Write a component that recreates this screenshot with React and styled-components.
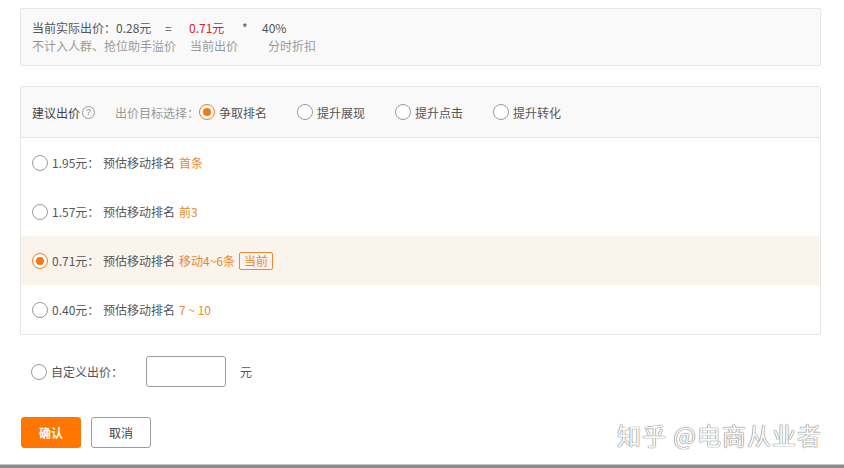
import React, { useState } from 'react';
import styled, { createGlobalStyle } from 'styled-components';

const GlobalStyle = createGlobalStyle`
  html, body {
    margin: 0;
    padding: 0;
    background: #fff;
    overflow: hidden;
  }
  body {
    font-family: "Noto Sans CJK SC", "Microsoft YaHei", sans-serif;
    font-size: 12px;
    color: #555;
  }
`;

const Page = styled.div`
  position: relative;
  width: 844px;
  height: 468px;
  padding: 8px 23px 0 20px;
  box-sizing: border-box;
`;

const Summary = styled.div`
  background: #f9f9f9;
  border: 1px solid #e6e6e6;
  border-radius: 2px;
  padding: 10px 11px;
`;

const Line = styled.div`
  display: flex;
  line-height: 18px;
  color: ${(p) => (p.muted ? '#999' : '#555')};
`;

const Cell = styled.span`
  width: ${(p) => p.w}px;
  flex-shrink: 0;
  white-space: nowrap;
  color: ${(p) => (p.red ? '#d4232b' : 'inherit')};
`;

const Panel = styled.div`
  margin-top: 20px;
  border: 1px solid #e6e6e6;
  border-radius: 2px;
`;

const PanelHead = styled.div`
  display: flex;
  align-items: center;
  height: 50px;
  padding-left: 11px;
  background: #f9f9f9;
  border-bottom: 1px solid #e6e6e6;
  color: #555;
`;

const Title = styled.span`
  display: flex;
  align-items: center;
  color: #444;
  margin-right: 20px;
`;

const Help = styled.span`
  width: 11px;
  height: 11px;
  margin-left: 2px;
  border: 1px solid #999;
  border-radius: 50%;
  font-size: 9px;
  line-height: 11px;
  text-align: center;
  color: #888;
  font-family: "Liberation Sans", sans-serif;
`;

const Label = styled.span`
  color: #999;
  width: 84px;
`;

const Option = styled.label`
  display: flex;
  align-items: center;
  width: 98px;
  cursor: pointer;
  color: #555;
`;

const Circle = styled.span`
  width: 14px;
  height: 14px;
  border-radius: 50%;
  border: 1px solid ${(p) => (p.on ? '#f07a1c' : '#9a9a9a')};
  background: #fff;
  display: flex;
  align-items: center;
  justify-content: center;
  margin-right: 4px;
  flex-shrink: 0;
  &::after {
    content: '';
    width: 8px;
    height: 8px;
    border-radius: 50%;
    background: #f57a12;
    display: ${(p) => (p.on ? 'block' : 'none')};
  }
`;

const Row = styled.label`
  display: flex;
  align-items: center;
  height: 49px;
  padding-left: 11px;
  background: ${(p) => (p.on ? '#fbf4ec' : '#fff')};
  color: #555;
  cursor: pointer;
`;

const Price = styled.span`
  width: 51px;
`;

const Rank = styled.span`
  margin-left: 4px;
  color: #e8892e;
`;

const Tag = styled.span`
  margin-left: 4px;
  padding: 0 4px;
  height: 16px;
  line-height: 16px;
  border: 1px solid #eb8a35;
  border-radius: 2px;
  color: #e8892e;
`;

const Custom = styled.div`
  display: flex;
  align-items: center;
  margin-top: 21px;
  padding-left: 11px;
  color: #555;
`;

const CustomLabel = styled.label`
  display: flex;
  align-items: center;
  width: 115px;
  cursor: pointer;
`;

const Input = styled.input`
  width: 80px;
  height: 31px;
  box-sizing: border-box;
  border: 1px solid #9c9c9c;
  border-radius: 3px;
  margin-right: 14px;
  outline: none;
`;

const Actions = styled.div`
  display: flex;
  gap: 10px;
  margin-top: 30px;
  padding-left: 1px;
`;

const Button = styled.button`
  width: 60px;
  height: 31px;
  border-radius: 3px;
  font-family: inherit;
  font-size: 12px;
  cursor: pointer;
  border: 1px solid ${(p) => (p.primary ? '#ff7700' : '#9c9c9c')};
  background: ${(p) => (p.primary ? '#ff7700' : '#fff')};
  color: ${(p) => (p.primary ? '#fff' : '#444')};
  font-weight: ${(p) => (p.primary ? 'bold' : 'normal')};
`;

const Watermark = styled.div`
  position: absolute;
  right: 22px;
  top: 417px;
  font-size: 24px;
  letter-spacing: 1px;
  color: #fdfdfd;
  text-shadow: 0 0 1px #5e5e5e, 0 0 1px #5e5e5e;
  pointer-events: none;
`;

const Strip = styled.div`
  position: absolute;
  left: 0;
  right: 0;
  top: 464px;
  height: 10px;
  background: #8d8d8d;
  border-top: 1px solid #c4c4c4;
`;

const goals = ['争取排名', '提升展现', '提升点击', '提升转化'];

const bids = [
  { price: '1.95元：', rank: '首条' },
  { price: '1.57元：', rank: '前3' },
  { price: '0.71元：', rank: '移动4~6条', current: true },
  { price: '0.40元：', rank: '7 ~ 10' },
];

export default function App() {
  const [goal, setGoal] = useState(0);
  const [bid, setBid] = useState(2);

  return (
    <Page>
      <GlobalStyle />
      <Summary>
        <Line>
          <Cell w={133}>当前实际出价：0.28元</Cell>
          <Cell w={24}>=</Cell>
          <Cell w={53} red>0.71元</Cell>
          <Cell w={20}>*</Cell>
          <Cell w={60}>40%</Cell>
        </Line>
        <Line muted>
          <Cell w={158}>不计入人群、抢位助手溢价</Cell>
          <Cell w={78}>当前出价</Cell>
          <Cell w={60}>分时折扣</Cell>
        </Line>
      </Summary>

      <Panel>
        <PanelHead>
          <Title>
            建议出价<Help>?</Help>
          </Title>
          <Label>出价目标选择：</Label>
          {goals.map((g, i) => (
            <Option key={g} onClick={() => setGoal(i)}>
              <Circle on={goal === i} />
              {g}
            </Option>
          ))}
        </PanelHead>
        {bids.map((b, i) => (
          <Row key={b.price} on={bid === i} onClick={() => setBid(i)}>
            <Circle on={bid === i} />
            <Price>{b.price}</Price>
            预估移动排名
            <Rank>{b.rank}</Rank>
            {b.current && <Tag>当前</Tag>}
          </Row>
        ))}
      </Panel>

      <Custom>
        <CustomLabel onClick={() => setBid(-1)}>
          <Circle on={bid === -1} />
          自定义出价：
        </CustomLabel>
        <Input />
        元
      </Custom>

      <Actions>
        <Button primary>确认</Button>
        <Button>取消</Button>
      </Actions>

      <Watermark>知乎 @电商从业者</Watermark>

      <Strip />
    </Page>
  );
}
